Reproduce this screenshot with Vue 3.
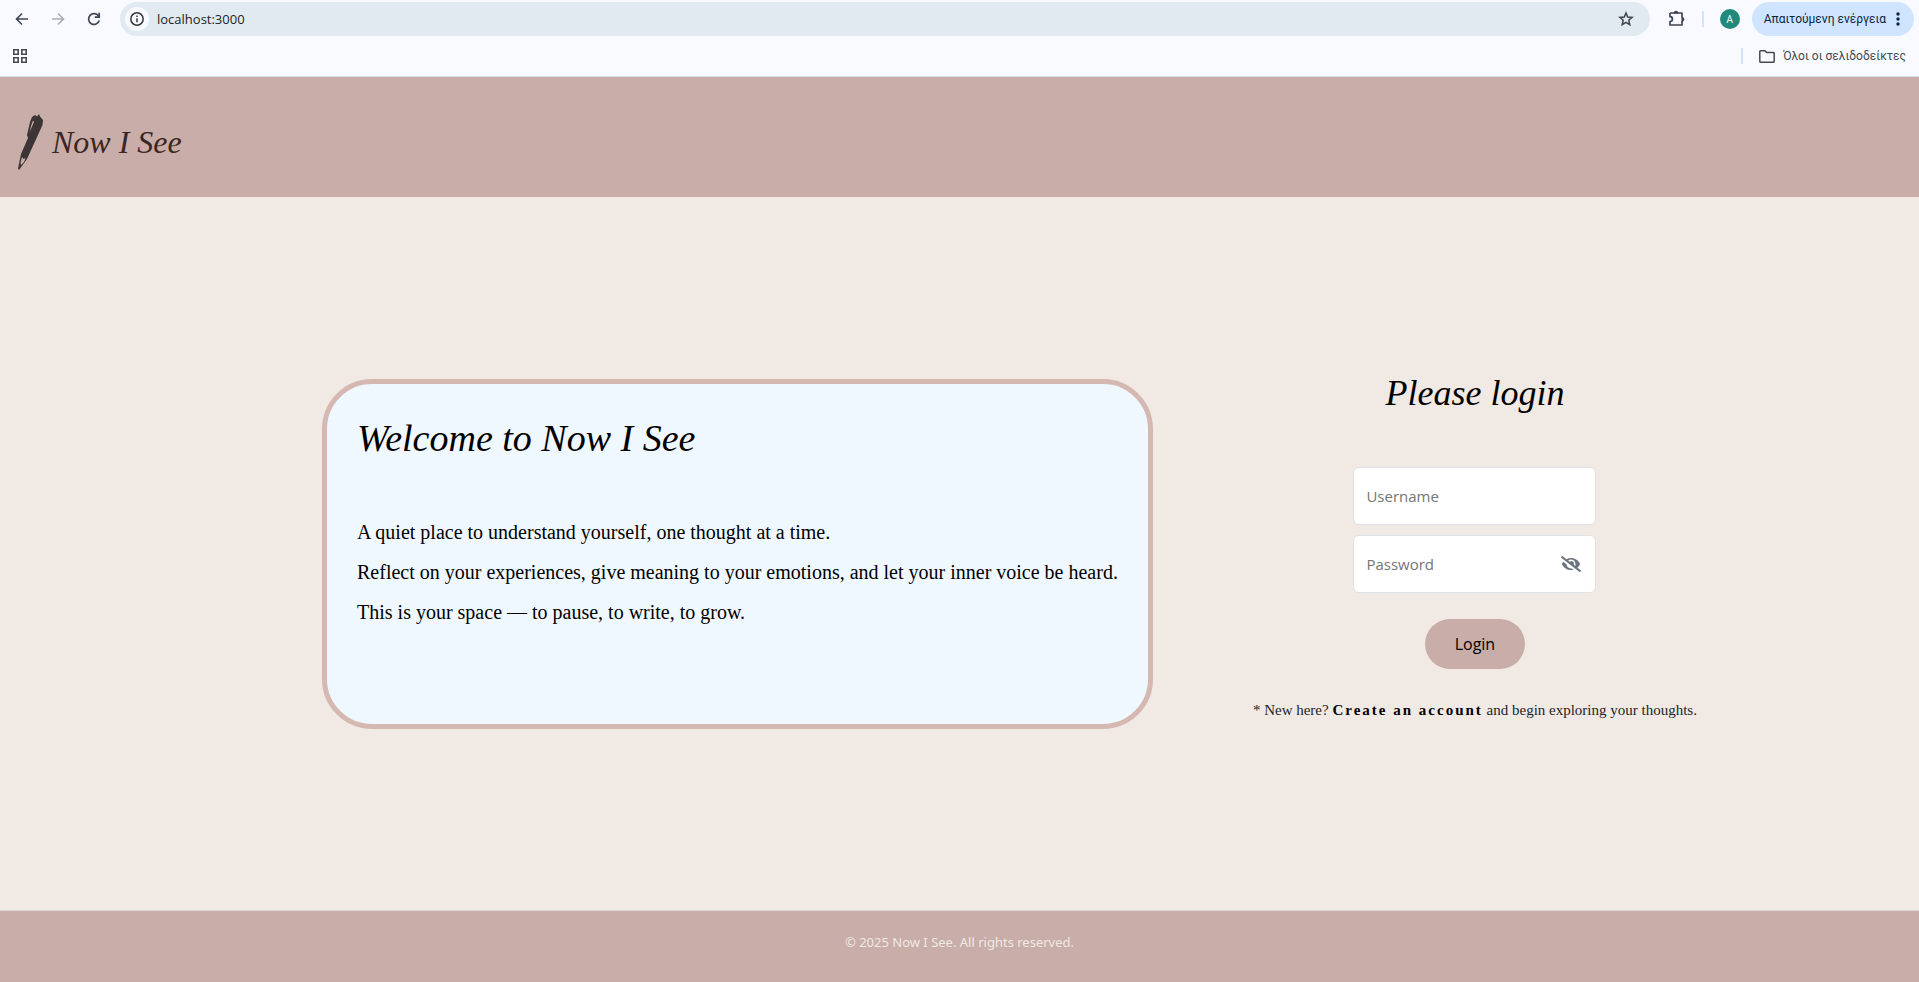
<script setup>
import { ref } from 'vue'

const username = ref('')
const password = ref('')
const reveal = ref(false)
const lines = [
  'A quiet place to understand yourself, one thought at a time.',
  'Reflect on your experiences, give meaning to your emotions, and let your inner voice be heard.',
  'This is your space — to pause, to write, to grow.'
]
</script>

<template>
  <div class="screen">
    <div class="browser">
      <div class="toolbar">
        <div class="nav">
          <button class="icon" type="button" aria-label="Back">
            <svg width="16" height="16" viewBox="0 0 16 16" fill="none" stroke="#3c4654" stroke-width="1.6"><path d="M14 8H3M8 2.5 2.5 8 8 13.5" /></svg>
          </button>
          <button class="icon" type="button" aria-label="Forward">
            <svg width="16" height="16" viewBox="0 0 16 16" fill="none" stroke="#a9adb3" stroke-width="1.6"><path d="M2 8h11M8 2.5 13.5 8 8 13.5" /></svg>
          </button>
          <button class="icon" type="button" aria-label="Reload">
            <svg width="16" height="16" viewBox="0 0 16 16" fill="none" stroke="#3c4654" stroke-width="1.7"><path d="M13.2 9.5A5.4 5.4 0 1 1 12.5 5L13.3 6" /><path d="M13.2 1.8v4.4H8.8" /></svg>
          </button>
        </div>
        <div class="address">
          <button class="info" type="button" aria-label="Site information">
            <svg width="16" height="16" viewBox="0 0 16 16" fill="none" stroke="#33373d" stroke-width="1.5"><circle cx="8" cy="8" r="6.2" /><path d="M8 7.2v4M8 4.5v1.6" /></svg>
          </button>
          <input class="url" type="text" value="localhost:3000" aria-label="Address" />
          <button class="star" type="button" aria-label="Bookmark this page">
            <svg width="16" height="16" viewBox="0 0 16 16" fill="none" stroke="#3f444b" stroke-width="1.5"><path d="m8 2 1.7 4 4.4.4-3.3 2.9 1 4.3L8 11.3l-3.8 2.3 1-4.3L1.9 6.4 6.3 6z" /></svg>
          </button>
        </div>
        <button class="icon puzzle" type="button" aria-label="Extensions">
          <svg width="18" height="18" viewBox="0 0 18 18" fill="none" stroke="#3c4654" stroke-width="1.7" stroke-linejoin="round"><path d="M2 3H14V7.5M14 11V15H2V11.5A2.3 2.3 0 0 0 2 6.7V3" /><path d="M6.3 2.7a1.8 1.8 0 0 1 3.4 0ZM14.3 7.5a1.8 1.8 0 0 1 0 3.4Z" fill="#3c4654" /></svg>
        </button>
        <span class="divider"></span>
        <button class="avatar" type="button">A</button>
        <button class="action" type="button">
          <span>Απαιτούμενη ενέργεια</span>
          <svg width="4" height="16" viewBox="0 0 4 16" fill="#0a2540"><circle cx="2" cy="3" r="1.7" /><circle cx="2" cy="8" r="1.7" /><circle cx="2" cy="13" r="1.7" /></svg>
        </button>
      </div>
      <div class="bookmarks">
        <button class="icon apps" type="button" aria-label="Apps">
          <svg width="14" height="14" viewBox="0 0 14 14" fill="none" stroke="#45494f" stroke-width="1.6"><path d="M.8.8h4.4v4.4H.8zM8.8.8h4.4v4.4H8.8zM.8 8.8h4.4v4.4H.8zM8.8 8.8h4.4v4.4H8.8z" /></svg>
        </button>
        <span class="divider"></span>
        <button class="folder" type="button">
          <svg width="16" height="13" viewBox="0 0 16 13" fill="none" stroke="#45494f" stroke-width="1.5" stroke-linejoin="round"><path d="M.8 11.5V1.5Q.8.8 1.5.8H6l1.6 1.7h6.9q.7 0 .7.7v8.3q0 .7-.7.7h-13q-.7 0-.7-.7z" /></svg>
          <span>Όλοι οι σελιδοδείκτες</span>
        </button>
      </div>
    </div>

    <header class="header">
      <a class="brand" href="#">
        <svg width="26" height="56" viewBox="0 0 26 56"><path fill="#3b3536" d="M14 3 17 1 19 2.500 21 0 22 2.500 25 6 24.500 11 9 45 1 56 0 54.500 3 40 10 24 9 21 12 8Z" /><path fill="#c8ada8" d="M13 12 15 6.500 16 8 12.500 16 11.500 19ZM4 43 5.500 45 7.500 44 6 48 3 51 2.500 49Z" /></svg>
        <span>Now I See</span>
      </a>
    </header>

    <main class="main">
      <section class="card">
        <h1>Welcome to Now I See</h1>
        <p v-for="line in lines" :key="line">{{ line }}</p>
      </section>

      <form class="login" @submit.prevent>
        <h1>Please login</h1>
        <div class="field">
          <input v-model="username" type="text" placeholder="Username" aria-label="Username" />
        </div>
        <div class="field">
          <input v-model="password" :type="reveal ? 'text' : 'password'" placeholder="Password" aria-label="Password" />
          <button class="eye" type="button" aria-label="Show password" @click="reveal = !reveal">
            <svg width="20" height="16" viewBox="0 0 640 512" fill="#6c757d"><path d="M320 400c-75.850 0-137.250-58.710-142.900-133.110L72.200 185.820c-13.790 17.300-26.480 35.590-36.720 55.590a32.350 32.350 0 0 0 0 29.190C89.710 376.410 197.070 448 320 448c26.910 0 52.870-4 77.890-10.460L346 397.390a144.130 144.130 0 0 1-26 2.610zm313.820 58.100l-110.550-85.440a331.250 331.250 0 0 0 81.250-102.070 32.350 32.350 0 0 0 0-29.190C550.290 135.590 442.930 64 320 64a308.150 308.150 0 0 0-147.320 37.700L45.460 3.370A16 16 0 0 0 23 6.180L3.370 31.450A16 16 0 0 0 6.180 53.900l588.360 454.730a16 16 0 0 0 22.460-2.810l19.640-25.270a16 16 0 0 0-2.820-22.450zM450.880 317.270l-39.300-30.370A94.750 94.750 0 0 0 416 256a94.760 94.760 0 0 0-121.310-92.210A47.650 47.650 0 0 1 304 192a46.640 46.640 0 0 1-1.540 10l-73.610-56.890A142.310 142.310 0 0 1 320 112a143.920 143.920 0 0 1 144 144c0 21.630-5.290 41.790-13.120 61.270z" /></svg>
          </button>
        </div>
        <button class="submit" type="submit">Login</button>
        <p class="signup">* New here? <a href="#">Create an account</a> and begin exploring your thoughts.</p>
      </form>
    </main>

    <footer class="footer">© 2025 Now I See. All rights reserved.</footer>
  </div>
</template>

<style>
body {
  margin: 0;
}
</style>

<style scoped>
.screen {
  min-height: 100vh;
  display: flex;
  flex-direction: column;
  background: #f1e9e4;
  color: #000;
  font-family: "Open Sans", "Noto Sans", sans-serif;
}
.screen *,
.screen {
  box-sizing: border-box;
}
button {
  display: flex;
  align-items: center;
  justify-content: center;
  border: 0;
  padding: 0;
  background: none;
  font: inherit;
  color: inherit;
  cursor: pointer;
}
input {
  border: 0;
  padding: 0;
  outline: 0;
  background: none;
  font: inherit;
  min-width: 0;
}
.browser {
  background: #f8faff;
  border-bottom: 1px solid #d5e0ea;
}
.toolbar {
  height: 38px;
  display: flex;
  align-items: center;
  padding: 2px 5px 2px 14px;
}
.nav {
  display: flex;
  gap: 20px;
}
.address {
  flex: 1;
  height: 34px;
  margin: 0 18px;
  padding: 0 16px 0 5px;
  display: flex;
  align-items: center;
  border-radius: 17px;
  background: #e2eaf1;
}
.info {
  width: 24px;
  height: 24px;
  border-radius: 50%;
  background: #f8faff;
}
.url {
  flex: 1;
  margin-left: 8px;
  font-size: 13px;
  color: #1f2227;
}
.divider {
  width: 2px;
  height: 16px;
  background: #cfe4fd;
}
.toolbar .divider {
  margin: 0 16px;
}
.avatar {
  width: 20px;
  height: 20px;
  border-radius: 50%;
  background: #21897a;
  color: #fff;
  font-size: 10px;
}
.action {
  height: 34px;
  margin-left: 12px;
  padding: 0 14px 0 12px;
  gap: 10px;
  border-radius: 17px;
  background: #cfe5ff;
  color: #0a2540;
  font-family: Roboto, "Noto Sans", sans-serif;
  font-size: 12px;
}
.bookmarks {
  height: 38px;
  display: flex;
  align-items: center;
  padding: 0 13px 2px;
}
.apps {
  margin-right: auto;
}
.folder {
  margin-left: 16px;
  gap: 8px;
  font-family: Roboto, "Noto Sans", sans-serif;
  font-size: 12px;
  color: #45494f;
}
.header {
  height: 120px;
  padding: 10px 18px 0;
  display: flex;
  align-items: center;
  background: #c8ada8;
}
.brand {
  display: flex;
  align-items: center;
  gap: 8px;
  color: #3a2723;
  text-decoration: none;
  font: italic 32px/56px "Liberation Serif", serif;
}
.main {
  flex: 1;
  display: flex;
  align-items: center;
  justify-content: center;
  gap: 100px;
  padding-left: 100px;
}
h1 {
  margin: 0;
  font: italic 38px/48px "Liberation Serif", serif;
}
.card {
  min-height: 350px;
  padding: 30px;
  border: 5px solid #d4b8b1;
  border-radius: 50px;
  background: #f0f8ff;
}
.card h1 {
  margin-bottom: 50px;
}
.card p {
  margin: 0;
  font: 20px/40px "Liberation Serif", serif;
}
.login {
  display: flex;
  flex-direction: column;
  align-items: center;
  padding-bottom: 18px;
}
.login h1 {
  margin-bottom: 50px;
  font-size: 36px;
}
.field {
  width: 243px;
  height: 58px;
  margin-bottom: 10px;
  padding: 0 14px 0 12px;
  display: flex;
  align-items: center;
  border: 1px solid #dee2e6;
  border-radius: 6px;
  background: #fff;
}
.field input {
  flex: 1;
  align-self: stretch;
  font-size: 15px;
}
.field input::placeholder {
  color: #757575;
  opacity: 1;
}
.submit {
  width: 100px;
  height: 50px;
  margin: 16px 0 30px;
  border-radius: 25px;
  background: #c8ada8;
  font-size: 16px;
}
.signup {
  margin: 0;
  font: 15px/22px "Liberation Serif", serif;
  color: #212529;
}
.signup a {
  color: #000;
  font-weight: bold;
  letter-spacing: 2px;
  text-decoration: none;
}
.footer {
  height: 72px;
  padding-top: 20px;
  border-top: 1px solid #dbd8d7;
  background: #c8ada8;
  color: #f1e9e4;
  font-family: "Noto Sans", sans-serif;
  font-size: 13px;
  line-height: 22px;
  text-align: center;
}
</style>
